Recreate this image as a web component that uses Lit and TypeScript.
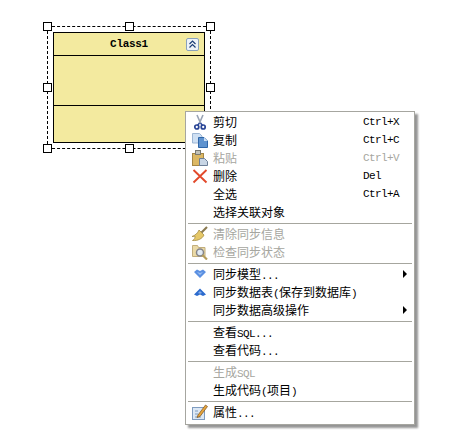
import { LitElement, html, css, svg } from "lit";
import { customElement } from "lit/decorators.js";

type Item = { t?: string; k?: string; d?: boolean; i?: string; sub?: boolean; sep?: boolean };

const icons: Record<string, unknown> = {
  cut: svg`<path d="M5 1l3.500 8M11 1L7.500 9" stroke="#98a2b4" stroke-width="1.600" fill="none"/><path d="M7.500 9L5.500 11.500M8.500 9l2 2.500" stroke="#2f4a9a" stroke-width="1.500"/><circle cx="4.800" cy="13" r="2" fill="none" stroke="#2a4596" stroke-width="1.700"/><circle cx="11.200" cy="13" r="2" fill="none" stroke="#2a4596" stroke-width="1.700"/>`,
  copy: svg`<path d="M0.500 1.500h7l2.500 2.500v7H0.500z" fill="#cfe0f3" stroke="#9db6d4"/><path d="M6.500 5.500H12l3.500 3.500v6.500H6.500z" fill="#5f93cf" stroke="#2f66a8"/><path d="M12 5.500v3.500h3.500z" fill="#cfe0f3"/>`,
  paste: svg`<rect x="0.500" y="3.500" width="11" height="12" fill="#dcb864" stroke="#a58644"/><rect x="3.500" y="0.500" width="5" height="4" fill="#c2c2b8" stroke="#7a7a72"/><path d="M7.500 8.500h5l3 3v4h-8z" fill="#c8d5e4" stroke="#6d7f97"/>`,
  del: svg`<path d="M1.500 2l13 12.500M14.500 2L1.500 14.500" stroke="#e2492b" stroke-width="1.900"/>`,
  broom: svg`<path d="M9.500 6.500L15 1" stroke="#8a7a50" stroke-width="2.200"/><path d="M7 4l5 5c-1.500 3.500-6 6-11.500 5.500 2.500-1 2.500-3 2.500-4.500-1 .5-2 .5-3 .5C3 9.500 6 7 7 4z" fill="#e6c868" stroke="#a58d45" stroke-width=".8"/>`,
  check: svg`<path d="M0.500 1.500h5l1 2h6.500v9H0.500z" fill="#ead9a6" stroke="#c2ae7c"/><circle cx="8" cy="8.500" r="3.500" fill="#e2ebf4" stroke="#85858a" stroke-width="1.500"/><path d="M10.500 11L15 15.500" stroke="#b59d5c" stroke-width="2.200"/>`,
  down: svg`<path d="M2 6l3-2.500L8 5l3-1.500L14 6l-6 6z" fill="#5b90e2"/><path d="M5 6l3 1 3-1-3 3z" fill="#9dbff0"/>`,
  up: svg`<path d="M2 10.500L8 4.500l6 6-3 1.500-3-1.500L5 12z" fill="#2c6bce"/><path d="M6 9l2-2 2 2-2 .8z" fill="#86aeea"/>`,
  prop: svg`<rect x="0.500" y="3.500" width="12" height="12" fill="#dce8f5" stroke="#7f9cc0"/><path d="M3 7h3M3 10h3M3 13h6" stroke="#7f9cc0"/><path d="M6 11l7.500-10 2 1.500-7.500 10-3 1z" fill="#e6a53c" stroke="#7a5020" stroke-width=".7"/>`,
};

const items: Item[] = [
  { t: "剪切", k: "Ctrl+X", i: "cut" },
  { t: "复制", k: "Ctrl+C", i: "copy" },
  { t: "粘贴", k: "Ctrl+V", i: "paste", d: true },
  { t: "删除", k: "Del", i: "del" },
  { t: "全选", k: "Ctrl+A" },
  { t: "选择关联对象" },
  { sep: true },
  { t: "清除同步信息", i: "broom", d: true },
  { t: "检查同步状态", i: "check", d: true },
  { sep: true },
  { t: "同步模型...", i: "down", sub: true },
  { t: "同步数据表(保存到数据库)", i: "up" },
  { t: "同步数据高级操作", sub: true },
  { sep: true },
  { t: "查看SQL..." },
  { t: "查看代码..." },
  { sep: true },
  { t: "生成SQL", d: true },
  { t: "生成代码(项目)" },
  { sep: true },
  { t: "属性...", i: "prop" },
];

const label = (t: string) =>
  t.split(/([\x20-\x7e]+)/).map((p, i) => (i % 2 ? html`<span class="lat">${p}</span>` : p));

@customElement("app-root")
export class AppRoot extends LitElement {
  static styles = css`
    :host {
      display: block;
      position: relative;
      width: 467px;
      height: 445px;
      background: #fff;
      overflow: hidden;
      font-family: "Noto Sans CJK SC", "Liberation Mono", monospace;
    }
    .sel {
      position: absolute;
      left: 47px;
      top: 26px;
      width: 164px;
      height: 123px;
      box-sizing: border-box;
      border: 1px dashed #000;
    }
    .h {
      position: absolute;
      width: 9px;
      height: 9px;
      box-sizing: border-box;
      background: #fff;
      border: 1px solid #000;
    }
    .class {
      position: absolute;
      left: 53px;
      top: 32px;
      width: 152px;
      height: 111px;
      box-sizing: border-box;
      border: 1px solid #000;
      background: #f3ea9f;
      display: grid;
      grid-template-rows: 23px 50px 1fr;
    }
    .title {
      display: flex;
      align-items: center;
      justify-content: center;
      font: bold 11px "Liberation Mono", monospace;
      letter-spacing: -0.3px;
      position: relative;
      border-bottom: 1px solid #000;
    }
    .mid {
      border-bottom: 1px solid #000;
    }
    .col {
      position: absolute;
      right: 5px;
      top: 5px;
      width: 13px;
      height: 13px;
      box-sizing: border-box;
      border: 1px solid #8aa2bc;
      border-radius: 2px;
      background: #eef3f8;
    }
    .col svg { display: block; }
    .menu {
      position: absolute;
      left: 185px;
      top: 111px;
      width: 230px;
      box-sizing: border-box;
      background: #fff;
      border: 1px solid #a6a6a0;
      padding: 1px 1px 3px;
      box-shadow: 3px 3px 2px rgba(0, 0, 0, 0.42);
      color: #000;
    }
    .row {
      display: grid;
      grid-template-columns: 26px 150px 1fr 10px;
      align-items: center;
      height: 18px;
      font-size: 12px;
      line-height: 18px;
      white-space: nowrap;
    }
    .row.dis { color: #a6a6a0; }
    .ic {
      display: flex;
      justify-content: center;
      align-items: center;
    }
    .ic svg { display: block; }
    .key, .lat {
      font: 11px "Liberation Mono", monospace;
      letter-spacing: -0.6px;
    }
    .arrow {
      width: 0;
      height: 0;
      border-left: 4px solid #000;
      border-top: 4px solid transparent;
      border-bottom: 4px solid transparent;
    }
    .sep {
      height: 1px;
      background: #a6a69e;
      margin: 2px 1px 1px;
    }
  `;

  render() {
    const hs = [
      [43, 22], [125, 22], [206, 22],
      [43, 83], [206, 83],
      [43, 144], [125, 144], [206, 144],
    ];
    return html`
      <div class="sel"></div>
      <div class="class">
        <div class="title">Class1
          <div class="col"><svg width="11" height="11" viewBox="0 0 11 11"><path d="M2.500 5L5.500 2l3 3M2.500 8.500L5.500 5.500l3 3" fill="none" stroke="#1c3f78" stroke-width="1.200"/></svg></div>
        </div>
        <div class="mid"></div>
        <div></div>
      </div>
      ${hs.map(([x, y]) => html`<div class="h" style="left:${x}px;top:${y}px"></div>`)}
      <div class="menu">
        ${items.map((it) =>
          it.sep
            ? html`<div class="sep"></div>`
            : html`<div class="row ${it.d ? "dis" : ""}">
                <div class="ic">${it.i ? html`<svg width="16" height="16" viewBox="0 0 16 16">${icons[it.i]}</svg>` : ""}</div>
                <div>${label(it.t ?? "")}</div>
                <div class="key">${it.k ?? ""}</div>
                <div>${it.sub ? html`<div class="arrow"></div>` : ""}</div>
              </div>`
        )}
      </div>
    `;
  }
}
